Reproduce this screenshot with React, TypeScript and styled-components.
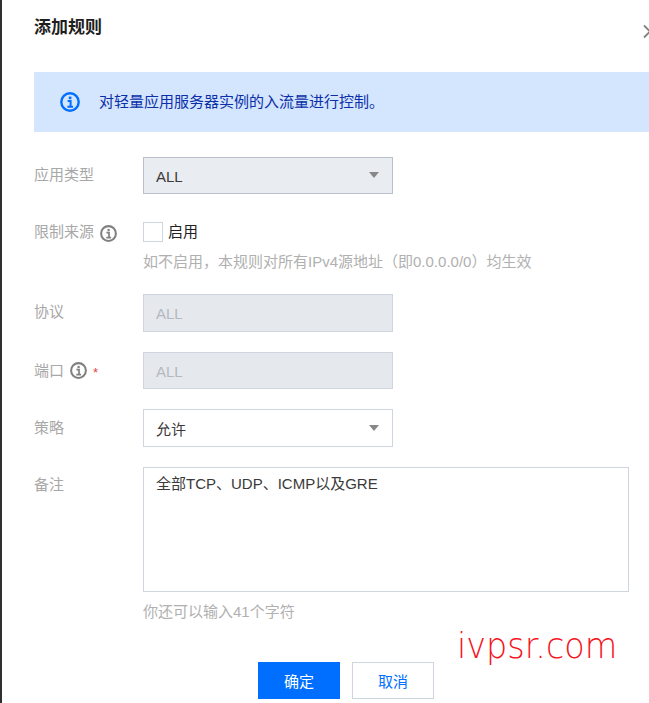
import React from "react";
import styled, { createGlobalStyle } from "styled-components";

const Global = createGlobalStyle`
  html, body { margin: 0; padding: 0; background: #fff; }
  body { width: 649px; height: 703px; overflow: hidden; font-family: "Liberation Sans", "Noto Sans CJK SC", sans-serif; }
`;

const Page = styled.div`
  position: relative;
  width: 649px;
  height: 703px;
  overflow: hidden;
  display: flex;
  background: #fff;
`;
const Backdrop = styled.div`
  width: 2px;
  flex: none;
  background: #2f3033;
`;
const Dialog = styled.div`
  flex: 1;
  min-width: 0;
  padding: 0 0 0 32px;
  display: flex;
  flex-direction: column;
`;
const Header = styled.div`
  height: 72px;
  padding-top: 17px;
  box-sizing: border-box;
`;
const Title = styled.h2`
  margin: 0;
  font-size: 17px;
  line-height: 22px;
  font-weight: 700;
  color: #1f1f1f;
`;
const CloseIcon = styled.svg`
  position: absolute;
  left: 643px;
  top: 24px;
`;
const Alert = styled.div`
  height: 60px;
  background: #d4e5fe;
  display: flex;
  align-items: center;
  gap: 19px;
  padding-left: 26px;
  font-size: 15px;
  line-height: 20px;
  color: #0a2fa8;
`;
const AlertText = styled.span`
  margin-top: -1px;
`;
const Form = styled.div`
  display: flex;
  flex-direction: column;
  padding-top: 25px;
`;
const Row = styled.div<{ $mb: number }>`
  display: flex;
  margin-bottom: ${(p) => p.$mb}px;
`;
const Label = styled.div<{ $pt?: number }>`
  width: 109px;
  flex: none;
  display: flex;
  align-items: flex-start;
  gap: 6px;
  font-size: 15px;
  line-height: 20px;
  padding-top: ${(p) => p.$pt ?? 8}px;
  color: #a8a8a8;
`;
const LabelIcon = styled.span<{ $mt: number }>`
  display: flex;
  margin-top: ${(p) => p.$mt}px;
`;
const Star = styled.span`
  color: #e54545;
  font-size: 13px;
  line-height: 24px;
`;
const Field = styled.div<{ $disabled?: boolean; $grey?: boolean; $h: number }>`
  width: 250px;
  height: ${(p) => p.$h}px;
  box-sizing: border-box;
  border: 1px solid ${(p) => (p.$grey ? "#b9bfcc" : "#cfd5de")};
  background: ${(p) => (p.$disabled ? "#e5e8ed" : p.$grey ? "#e9ecf0" : "#fff")};
  color: ${(p) => (p.$disabled ? "#b4b8bf" : "#3a3a3a")};
  display: flex;
  align-items: center;
  justify-content: space-between;
  padding: 1px 13px 0 12px;
  font-size: 15px;
`;
const Caret = styled.span`
  width: 0;
  height: 0;
  border-left: 5px solid transparent;
  border-right: 5px solid transparent;
  border-top: 6px solid #888;
  margin-top: -2px;
`;
const Stack = styled.div`
  display: flex;
  flex-direction: column;
`;
const CheckLine = styled.label`
  display: flex;
  align-items: center;
  gap: 5px;
  font-size: 15px;
  color: #222;
  height: 20px;
`;
const CheckText = styled.span`
  margin-top: -3px;
`;
const Box = styled.span`
  width: 20px;
  height: 20px;
  box-sizing: border-box;
  border: 1px solid #cfd5de;
  background: #fff;
`;
const Help = styled.div<{ $mt: number }>`
  font-size: 15px;
  line-height: 20px;
  color: #b0b0b0;
  margin-top: ${(p) => p.$mt}px;
`;
const TextArea = styled.div`
  width: 486px;
  height: 125px;
  box-sizing: border-box;
  border: 1px solid #cfd5de;
  padding: 6px 12px;
  font-size: 15px;
  line-height: 20px;
  color: #3a3a3a;
`;
const Actions = styled.div`
  display: flex;
  gap: 12px;
  padding-left: 224px;
  margin-top: 40px;
`;
const Button = styled.button<{ $primary?: boolean }>`
  width: 82px;
  height: 37px;
  box-sizing: border-box;
  border: 1px solid ${(p) => (p.$primary ? "#006eff" : "#cfd5de")};
  background: ${(p) => (p.$primary ? "#006eff" : "#fff")};
  color: ${(p) => (p.$primary ? "#fff" : "#006eff")};
  font: inherit;
  font-size: 15px;
  padding: 0;
`;
const Watermark = styled.div`
  position: absolute;
  left: 457px;
  top: 621px;
  font-family: "DejaVu Sans", sans-serif;
  font-weight: 200;
  font-size: 35px;
  line-height: 50px;
  color: #f5141c;
  transform: scaleX(0.955);
  transform-origin: left top;
  white-space: nowrap;
`;

const InfoIcon = ({ color, size }: { color: string; size: number }) => (
  <svg width={size} height={size} viewBox="0 0 20 20" fill="none" style={{ flex: "none" }}>
    <circle cx="10" cy="10" r="8.7" stroke={color} strokeWidth="2.4" />
    <rect x="8.8" y="4.6" width="2.6" height="2.6" fill={color} />
    <path d="M7.6 8.9H10.6V14.6M7.4 14.8H13" stroke={color} strokeWidth="2" />
  </svg>
);

export default function App() {
  return (
    <>
      <Global />
      <Page>
        <Backdrop />
        <Dialog>
          <Header>
            <Title>添加规则</Title>
            <CloseIcon width="12" height="16" viewBox="0 0 12 16" fill="none">
              <path d="M1 1.5 L7 7.5 L1 13.5 M13 1.5 L7 7.5 L13 13.5" stroke="#808080" strokeWidth="1.8" />
            </CloseIcon>
          </Header>
          <Alert>
            <InfoIcon color="#006eff" size={20} />
            <AlertText>对轻量应用服务器实例的入流量进行控制。</AlertText>
          </Alert>
          <Form>
            <Row $mb={28}>
              <Label>应用类型</Label>
              <Field $grey $h={37}>
                ALL
                <Caret />
              </Field>
            </Row>
            <Row $mb={22}>
              <Label $pt={0}>
                限制来源
                <LabelIcon $mt={3}>
                  <InfoIcon color="#808080" size={17} />
                </LabelIcon>
              </Label>
              <Stack>
                <CheckLine>
                  <Box />
                  <CheckText>启用</CheckText>
                </CheckLine>
                <Help $mt={10}>如不启用，本规则对所有IPv4源地址（即0.0.0.0/0）均生效</Help>
              </Stack>
            </Row>
            <Row $mb={20}>
              <Label>协议</Label>
              <Field $disabled $h={38}>
                ALL
              </Field>
            </Row>
            <Row $mb={20}>
              <Label $pt={9}>
                端口
                <LabelIcon $mt={1}>
                  <InfoIcon color="#808080" size={17} />
                </LabelIcon>
                <Star>*</Star>
              </Label>
              <Field $disabled $h={37}>
                ALL
              </Field>
            </Row>
            <Row $mb={20}>
              <Label $pt={9}>策略</Label>
              <Field $h={38}>
                允许
                <Caret />
              </Field>
            </Row>
            <Row $mb={0}>
              <Label>备注</Label>
              <Stack>
                <TextArea>全部TCP、UDP、ICMP以及GRE</TextArea>
                <Help $mt={10}>你还可以输入41个字符</Help>
              </Stack>
            </Row>
            <Actions>
              <Button $primary>确定</Button>
              <Button>取消</Button>
            </Actions>
          </Form>
        </Dialog>
        <Watermark>ivpsr.com</Watermark>
      </Page>
    </>
  );
}
